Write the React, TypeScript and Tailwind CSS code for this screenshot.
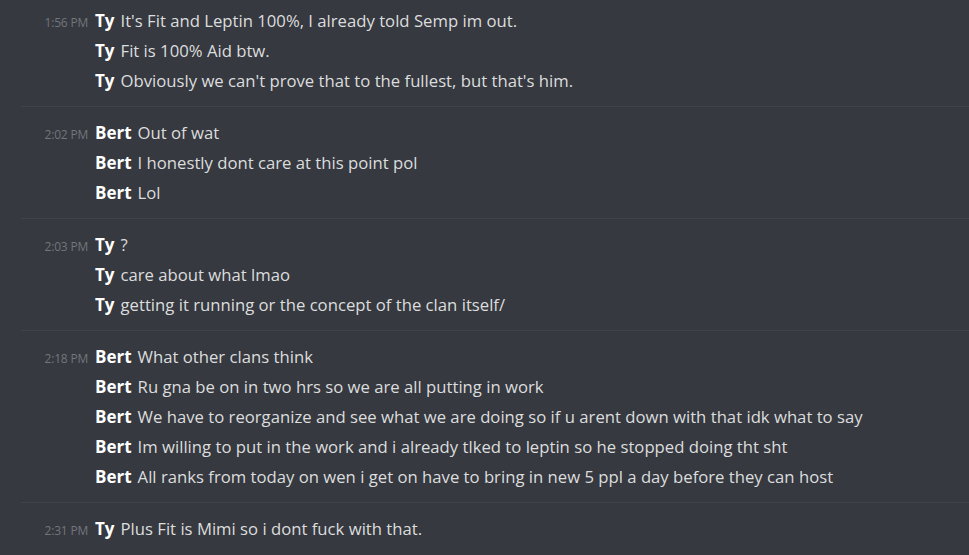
const groups = [
  {
    time: "1:56 PM",
    name: "Ty",
    lines: [
      "It's Fit and Leptin 100%, I already told Semp im out.",
      "Fit is 100% Aid btw.",
      "Obviously we can't prove that to the fullest, but that's him.",
    ],
  },
  {
    time: "2:02 PM",
    name: "Bert",
    lines: ["Out of wat", "I honestly dont care at this point pol", "Lol"],
  },
  {
    time: "2:03 PM",
    name: "Ty",
    lines: ["?", "care about what lmao", "getting it running or the concept of the clan itself/"],
  },
  {
    time: "2:18 PM",
    name: "Bert",
    lines: [
      "What other clans think",
      "Ru gna be on in two hrs so we are all putting in work",
      "We have to reorganize and see what we are doing so if u arent down with that idk what to say",
      "Im willing to put in the work and i already tlked to leptin so he stopped doing tht sht",
      "All ranks from today on wen i get on have to bring in new 5 ppl a day before they can host",
    ],
  },
  {
    time: "2:31 PM",
    name: "Ty",
    lines: ["Plus Fit is Mimi so i dont fuck with that."],
  },
];

export default function App() {
  return (
    <div className="w-[969px] h-[555px] overflow-hidden bg-[#36393f] font-['Open_Sans',sans-serif]">
      {groups.map((g, gi) => (
        <div
          key={gi}
          className={
            gi === 0
              ? "ml-[21px] pt-[6px] pb-[10px] border-b border-[#40434a]"
              : gi === groups.length - 1
              ? "ml-[21px] pt-[11px]"
              : "ml-[21px] pt-[11px] pb-[10px] border-b border-[#40434a]"
          }
        >
          {g.lines.map((line, li) => (
            <div key={li} className="flex items-baseline h-[30px] leading-[30px]">
              <span className="w-[67px] shrink-0 text-right text-[12px] tracking-[-0.2px] text-[#72767d]">
                {li === 0 ? g.time : ""}
              </span>
              <span className="ml-[7px] text-[17px] font-bold text-white">{g.name}</span>
              <span className="ml-[6px] text-[16.7px] text-[#dcddde] whitespace-nowrap">{line}</span>
            </div>
          ))}
        </div>
      ))}
    </div>
  );
}
